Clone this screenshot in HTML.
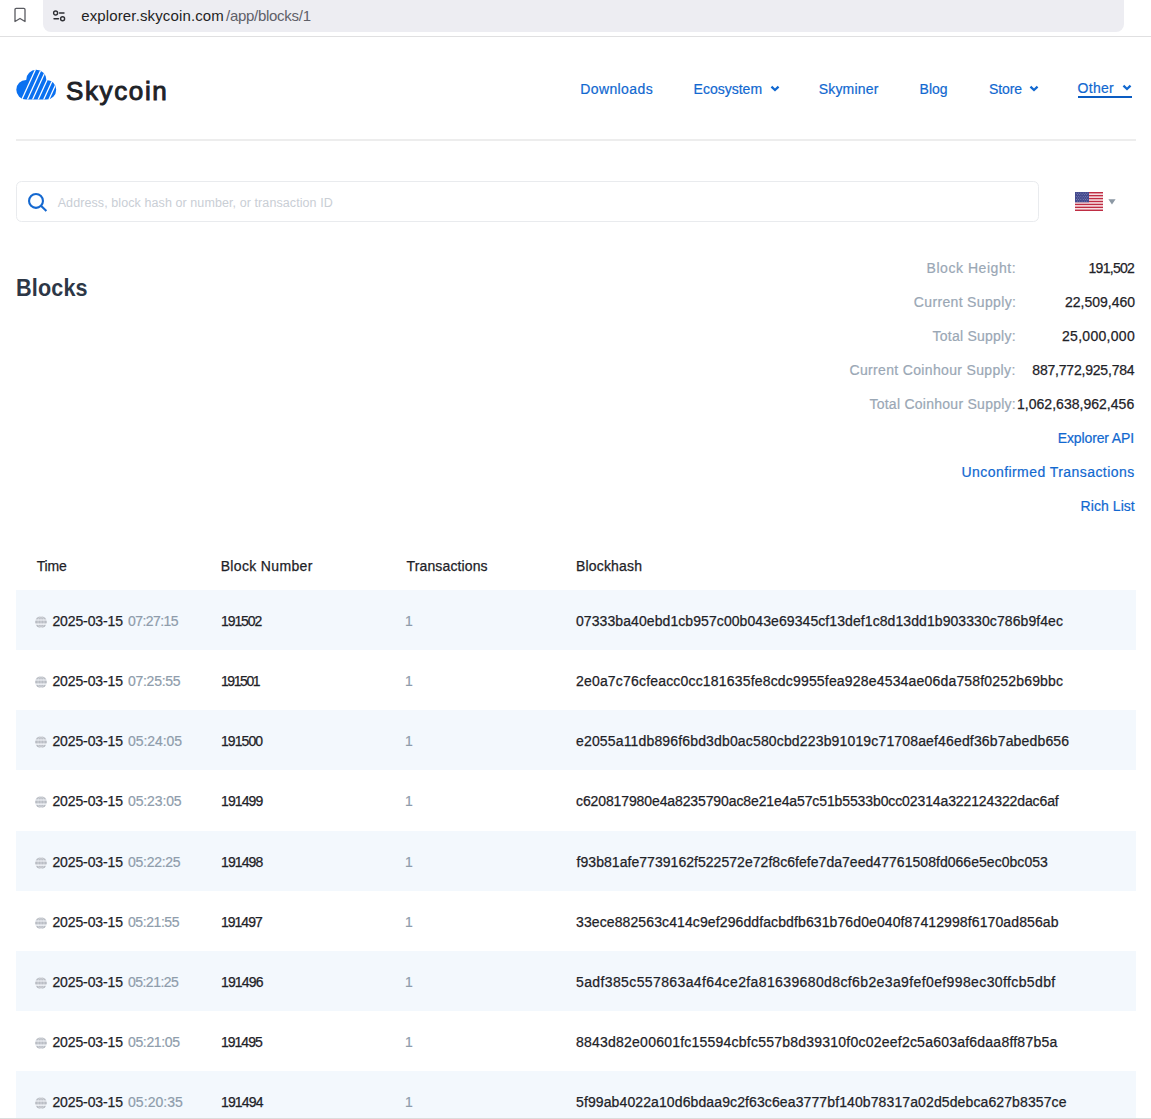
<!DOCTYPE html>
<html lang="en">
<head>
<meta charset="utf-8">
<title>Skycoin Explorer</title>
<style>
html,body{margin:0;padding:0;background:#fff;}
body{width:1151px;height:1119px;position:relative;overflow:hidden;font-family:"Liberation Sans",sans-serif;color:#1e2227;}
.abs{position:absolute;white-space:nowrap;}
#urlbar{left:43px;top:-12px;width:1081px;height:44px;background:#ededf2;border-radius:8px;}
#url1{top:6px;font-size:15px;line-height:20px;color:#1f1f24;}
#url2{top:6px;font-size:15px;line-height:20px;color:#5f6068;}
#chromeline{left:0;top:36px;width:1151px;height:1px;background:#e0e0e1;}
#logotext{top:71.500px;font-size:26px;line-height:38px;font-weight:normal;-webkit-text-stroke:0.950px #1e2227;color:#1e2227;}
.nav{top:79px;font-size:14px;line-height:20px;color:#1168d0;}
#otherline{left:1078px;top:96px;width:54px;height:2px;background:#0b5cc2;}
#hline{left:16px;top:139px;width:1120px;height:2px;background:#ededed;}
#search{left:16px;top:181px;width:1021px;height:39px;border:1.500px solid #e9ebee;border-radius:5.500px;}
#ph{top:194px;font-size:12.500px;line-height:18px;color:#c9ced5;}
#hd{top:271px;font-size:24px;line-height:34px;font-weight:bold;color:#2d3746;transform-origin:0 0;transform:scaleX(0.900);}
.lab{font-size:14px;line-height:20px;color:#9aa7b5;}
.val{font-size:14px;line-height:20px;color:#1e2227;}
.lnk{font-size:14px;line-height:20px;color:#1168d0;}
.th{top:556px;font-size:14px;line-height:20px;color:#1e2227;}
.row{left:16px;width:1120px;height:60px;}
.row.odd{background:#f3f8fd;}
.row div{position:absolute;top:21px;font-size:14px;line-height:20px;white-space:nowrap;}
.c1{color:#1e2227;}
.c1t{color:#8e9cab;}
.c2{color:#1e2227;}
.c3{color:#8e9cab;}
.c4{color:#1e2227;}
.globe{position:absolute;left:19.3px;top:25.600px;}
#bottomline{left:0;top:1118px;width:1151px;height:1px;background:#dcdcdc;}
.c1,.c2,.c4,.val,.th{-webkit-text-stroke:0.250px currentColor;}
.nav,.lnk,.lab,.c1t,.c3{-webkit-text-stroke:0.200px currentColor;}
</style>
</head>
<body>
<div class="abs" id="urlbar"></div>
<svg class="abs" style="left:13px;top:6px" width="14" height="18" viewBox="0 0 14 18"><path d="M3.200 2.300h7.600a1.200 1.200 0 0 1 1.200 1.200v12l-5-3l-5 3v-12a1.200 1.200 0 0 1 1.200-1.200z" fill="none" stroke="#5a5b61" stroke-width="1.300" stroke-linejoin="round"/></svg>
<svg class="abs" style="left:52px;top:9px" width="15" height="14" viewBox="0 0 15 14"><g fill="none" stroke="#2e2f34" stroke-width="1.400" stroke-linecap="round"><circle cx="3.600" cy="4" r="2"/><path d="M7.500 4h4.500"/><circle cx="10.600" cy="9.700" r="2"/><path d="M2 9.700h4.500"/></g></svg>
<div class="abs" id="url1" style="left:81.20px;letter-spacing:0.137px;">explorer.skycoin.com</div>
<div class="abs" id="url2" style="left:226.00px;letter-spacing:-0.283px;">/app/blocks/1</div>
<div class="abs" id="chromeline"></div>

<svg class="abs" id="logo" style="left:16px;top:69px" width="41" height="32" viewBox="0 0 41 32">
<defs><clipPath id="cl"><circle cx="10.100" cy="20.800" r="9.800"/><circle cx="20.300" cy="10.900" r="10.100"/><circle cx="30.400" cy="20.800" r="9.800"/><rect x="10" y="14" width="20.400" height="16.600"/></clipPath></defs>
<g clip-path="url(#cl)"><rect width="41" height="32" fill="#0a70f0"/>
<g stroke="#fff" stroke-width="1.250"><path d="M19.680 0L5.350 31.500"/><path d="M25.280 0L10.950 31.500"/><path d="M30.480 0L16.150 31.500"/><path d="M36.080 0L21.750 31.500"/><path d="M41.580 0L27.250 31.500"/><path d="M46.780 0L32.450 31.500"/></g></g>
</svg>
<div class="abs" id="logotext" style="left:66.00px;letter-spacing:1.619px;">Skycoin</div>

<div class="abs nav" id="nav1" style="left:580.20px;letter-spacing:0.400px;">Downloads</div>
<div class="abs nav" id="nav2" style="left:693.60px;letter-spacing:0.000px;">Ecosystem</div>
<svg class="abs" style="left:769.6px;top:85px" width="10" height="8" viewBox="0 0 10 8"><path d="M1.450 1.700L5 5l3.550-3.300" fill="none" stroke="#1168d0" stroke-width="2.300"/></svg>
<div class="abs nav" id="nav3" style="left:818.70px;letter-spacing:0.199px;">Skyminer</div>
<div class="abs nav" id="nav4" style="left:919.60px;letter-spacing:-0.000px;">Blog</div>
<div class="abs nav" id="nav5" style="left:989.00px;letter-spacing:-0.125px;">Store</div>
<svg class="abs" style="left:1028.5px;top:85px" width="10" height="8" viewBox="0 0 10 8"><path d="M1.450 1.700L5 5l3.550-3.300" fill="none" stroke="#1168d0" stroke-width="2.300"/></svg>
<div class="abs nav" id="nav6" style="left:1077.50px;top:77.500px;letter-spacing:0.300px;">Other</div>
<svg class="abs" style="left:1122.3px;top:84.2px" width="10" height="8" viewBox="0 0 10 8"><path d="M1.450 1.700L5 5l3.550-3.300" fill="none" stroke="#1168d0" stroke-width="2.300"/></svg>
<div class="abs" id="otherline"></div>
<div class="abs" id="hline"></div>

<div class="abs" id="search"></div>
<svg class="abs" style="left:27px;top:192px" width="22" height="22" viewBox="0 0 22 22"><g fill="none" stroke="#1468d0" stroke-width="2.100"><circle cx="9" cy="8.900" r="6.950"/><path d="M13.700 13.600L19.400 19.100"/></g></svg>
<div class="abs" id="ph" style="left:57.70px;letter-spacing:0.088px;">Address, block hash or number, or transaction ID</div>
<svg class="abs" style="left:1075px;top:192px" width="28" height="19" viewBox="0 0 28 19"><rect width="28" height="19" fill="#fbeef0"/><g fill="#bf2d43"><rect y="0" width="28" height="1.460"/><rect y="2.920" width="28" height="1.460"/><rect y="5.850" width="28" height="1.460"/><rect y="8.770" width="28" height="1.460"/><rect y="11.690" width="28" height="1.460"/><rect y="14.620" width="28" height="1.460"/><rect y="17.540" width="28" height="1.460"/></g><rect width="14" height="10.300" fill="#444a8e"/><g fill="#fff" fill-opacity="0.600"><circle cx="1.30" cy="1.10" r="0.420"/><circle cx="3.60" cy="1.10" r="0.420"/><circle cx="5.90" cy="1.10" r="0.420"/><circle cx="8.20" cy="1.10" r="0.420"/><circle cx="10.50" cy="1.10" r="0.420"/><circle cx="12.80" cy="1.10" r="0.420"/><circle cx="2.45" cy="2.70" r="0.420"/><circle cx="4.75" cy="2.70" r="0.420"/><circle cx="7.05" cy="2.70" r="0.420"/><circle cx="9.35" cy="2.70" r="0.420"/><circle cx="11.65" cy="2.70" r="0.420"/><circle cx="1.30" cy="4.30" r="0.420"/><circle cx="3.60" cy="4.30" r="0.420"/><circle cx="5.90" cy="4.30" r="0.420"/><circle cx="8.20" cy="4.30" r="0.420"/><circle cx="10.50" cy="4.30" r="0.420"/><circle cx="12.80" cy="4.30" r="0.420"/><circle cx="2.45" cy="5.90" r="0.420"/><circle cx="4.75" cy="5.90" r="0.420"/><circle cx="7.05" cy="5.90" r="0.420"/><circle cx="9.35" cy="5.90" r="0.420"/><circle cx="11.65" cy="5.90" r="0.420"/><circle cx="1.30" cy="7.50" r="0.420"/><circle cx="3.60" cy="7.50" r="0.420"/><circle cx="5.90" cy="7.50" r="0.420"/><circle cx="8.20" cy="7.50" r="0.420"/><circle cx="10.50" cy="7.50" r="0.420"/><circle cx="12.80" cy="7.50" r="0.420"/><circle cx="2.45" cy="9.10" r="0.420"/><circle cx="4.75" cy="9.10" r="0.420"/><circle cx="7.05" cy="9.10" r="0.420"/><circle cx="9.35" cy="9.10" r="0.420"/><circle cx="11.65" cy="9.10" r="0.420"/></g></svg>
<svg class="abs" style="left:1108px;top:199px" width="8" height="6" viewBox="0 0 8 6"><path d="M0.400 0.200h7.200L4 5.600z" fill="#8c98a4"/></svg>

<div class="abs" id="hd" style="left:15.80px;letter-spacing:0.160px;">Blocks</div>

<div class="abs lab" id="l1" style="top:258px;left:926.60px;letter-spacing:0.541px;">Block Height:</div><div class="abs val" id="v1" style="top:258px;left:1088.50px;letter-spacing:-0.700px;">191,502</div>
<div class="abs lab" id="l2" style="top:292px;left:913.80px;letter-spacing:0.343px;">Current Supply:</div><div class="abs val" id="v2" style="top:292px;left:1065.10px;letter-spacing:-0.023px;">22,509,460</div>
<div class="abs lab" id="l3" style="top:326px;left:932.60px;letter-spacing:0.233px;">Total Supply:</div><div class="abs val" id="v3" style="top:326px;left:1062.00px;letter-spacing:0.289px;">25,000,000</div>
<div class="abs lab" id="l4" style="top:360px;left:849.50px;letter-spacing:0.339px;">Current Coinhour Supply:</div><div class="abs val" id="v4" style="top:360px;left:1032.30px;letter-spacing:-0.200px;">887,772,925,784</div>
<div class="abs lab" id="l5" style="top:394px;left:869.40px;letter-spacing:0.262px;">Total Coinhour Supply:</div><div class="abs val" id="v5" style="top:394px;left:1017.00px;letter-spacing:0.025px;">1,062,638,962,456</div>
<div class="abs lnk" id="k1" style="top:428px;left:1057.80px;letter-spacing:-0.137px;">Explorer API</div>
<div class="abs lnk" id="k2" style="top:462px;left:961.50px;letter-spacing:0.435px;">Unconfirmed Transactions</div>
<div class="abs lnk" id="k3" style="top:496px;left:1080.60px;letter-spacing:0.060px;">Rich List</div>

<div class="abs th" id="th1" style="left:36.70px;letter-spacing:-0.200px;">Time</div>
<div class="abs th" id="th2" style="left:220.70px;letter-spacing:0.337px;">Block Number</div>
<div class="abs th" id="th3" style="left:406.60px;letter-spacing:0.127px;">Transactions</div>
<div class="abs th" id="th4" style="left:575.90px;letter-spacing:0.190px;">Blockhash</div>

<div class="abs row odd" style="top:590px;height:60px"><svg class="globe" width="12" height="12" viewBox="0 0 12 12"><circle cx="6" cy="6" r="5.850" fill="#b9bdc4"/><g fill="none" stroke="#f7fafd"><path d="M0 3.950h12M0 8.150h12" stroke-width="1.150"/><path d="M6 0v12" stroke-width="0.550" stroke-opacity="0.700"/><ellipse cx="6" cy="6" rx="3" ry="5.700" stroke-width="0.550" stroke-opacity="0.700"/></g></svg><div class="c1" id="d1" style="left:36.40px;letter-spacing:-0.114px;">2025-03-15</div><div class="c1t" id="t1" style="left:112.00px;letter-spacing:-0.550px;">07:27:15</div><div class="c2" id="n1" style="left:205.00px;letter-spacing:-1.080px;">191502</div><div class="c3" id="x1" style="left:389.00px">1</div><div class="c4" id="h1" style="left:560.00px;letter-spacing:0.080px;">07333ba40ebd1cb957c00b043e69345cf13def1c8d13dd1b903330c786b9f4ec</div></div>
<div class="abs row" style="top:650px;height:60px"><svg class="globe" width="12" height="12" viewBox="0 0 12 12"><circle cx="6" cy="6" r="5.850" fill="#b9bdc4"/><g fill="none" stroke="#f7fafd"><path d="M0 3.950h12M0 8.150h12" stroke-width="1.150"/><path d="M6 0v12" stroke-width="0.550" stroke-opacity="0.700"/><ellipse cx="6" cy="6" rx="3" ry="5.700" stroke-width="0.550" stroke-opacity="0.700"/></g></svg><div class="c1" id="d2" style="left:36.40px;letter-spacing:-0.114px;">2025-03-15</div><div class="c1t" id="t2" style="left:112.00px;letter-spacing:-0.279px;">07:25:55</div><div class="c2" id="n2" style="left:205.00px;letter-spacing:-1.420px;">191501</div><div class="c3" id="x2" style="left:389.00px">1</div><div class="c4" id="h2" style="left:560.00px;letter-spacing:0.181px;">2e0a7c76cfeacc0cc181635fe8cdc9955fea928e4534ae06da758f0252b69bbc</div></div>
<div class="abs row odd" style="top:710px;height:60px"><svg class="globe" width="12" height="12" viewBox="0 0 12 12"><circle cx="6" cy="6" r="5.850" fill="#b9bdc4"/><g fill="none" stroke="#f7fafd"><path d="M0 3.950h12M0 8.150h12" stroke-width="1.150"/><path d="M6 0v12" stroke-width="0.550" stroke-opacity="0.700"/><ellipse cx="6" cy="6" rx="3" ry="5.700" stroke-width="0.550" stroke-opacity="0.700"/></g></svg><div class="c1" id="d3" style="left:36.40px;letter-spacing:-0.114px;">2025-03-15</div><div class="c1t" id="t3" style="left:112.00px;letter-spacing:-0.057px;">05:24:05</div><div class="c2" id="n3" style="left:205.00px;letter-spacing:-0.940px;">191500</div><div class="c3" id="x3" style="left:389.00px">1</div><div class="c4" id="h3" style="left:560.00px;letter-spacing:0.156px;">e2055a11db896f6bd3db0ac580cbd223b91019c71708aef46edf36b7abedb656</div></div>
<div class="abs row" style="top:770px;height:61px"><svg class="globe" width="12" height="12" viewBox="0 0 12 12"><circle cx="6" cy="6" r="5.850" fill="#b9bdc4"/><g fill="none" stroke="#f7fafd"><path d="M0 3.950h12M0 8.150h12" stroke-width="1.150"/><path d="M6 0v12" stroke-width="0.550" stroke-opacity="0.700"/><ellipse cx="6" cy="6" rx="3" ry="5.700" stroke-width="0.550" stroke-opacity="0.700"/></g></svg><div class="c1" id="d4" style="left:36.40px;letter-spacing:-0.114px;">2025-03-15</div><div class="c1t" id="t4" style="left:112.00px;letter-spacing:-0.129px;">05:23:05</div><div class="c2" id="n4" style="left:205.00px;letter-spacing:-0.880px;">191499</div><div class="c3" id="x4" style="left:389.00px">1</div><div class="c4" id="h4" style="left:560.00px;letter-spacing:-0.111px;">c620817980e4a8235790ac8e21e4a57c51b5533b0cc02314a322124322dac6af</div></div>
<div class="abs row odd" style="top:831px;height:60px"><svg class="globe" width="12" height="12" viewBox="0 0 12 12"><circle cx="6" cy="6" r="5.850" fill="#b9bdc4"/><g fill="none" stroke="#f7fafd"><path d="M0 3.950h12M0 8.150h12" stroke-width="1.150"/><path d="M6 0v12" stroke-width="0.550" stroke-opacity="0.700"/><ellipse cx="6" cy="6" rx="3" ry="5.700" stroke-width="0.550" stroke-opacity="0.700"/></g></svg><div class="c1" id="d5" style="left:36.40px;letter-spacing:-0.114px;">2025-03-15</div><div class="c1t" id="t5" style="left:112.00px;letter-spacing:-0.271px;">05:22:25</div><div class="c2" id="n5" style="left:205.00px;letter-spacing:-0.880px;">191498</div><div class="c3" id="x5" style="left:389.00px">1</div><div class="c4" id="h5" style="left:560.60px;letter-spacing:0.041px;">f93b81afe7739162f522572e72f8c6fefe7da7eed47761508fd066e5ec0bc053</div></div>
<div class="abs row" style="top:891px;height:60px"><svg class="globe" width="12" height="12" viewBox="0 0 12 12"><circle cx="6" cy="6" r="5.850" fill="#b9bdc4"/><g fill="none" stroke="#f7fafd"><path d="M0 3.950h12M0 8.150h12" stroke-width="1.150"/><path d="M6 0v12" stroke-width="0.550" stroke-opacity="0.700"/><ellipse cx="6" cy="6" rx="3" ry="5.700" stroke-width="0.550" stroke-opacity="0.700"/></g></svg><div class="c1" id="d6" style="left:36.40px;letter-spacing:-0.114px;">2025-03-15</div><div class="c1t" id="t6" style="left:112.00px;letter-spacing:-0.429px;">05:21:55</div><div class="c2" id="n6" style="left:205.00px;letter-spacing:-1.000px;">191497</div><div class="c3" id="x6" style="left:389.00px">1</div><div class="c4" id="h6" style="left:560.00px;letter-spacing:0.108px;">33ece882563c414c9ef296ddfacbdfb631b76d0e040f87412998f6170ad856ab</div></div>
<div class="abs row odd" style="top:951px;height:60px"><svg class="globe" width="12" height="12" viewBox="0 0 12 12"><circle cx="6" cy="6" r="5.850" fill="#b9bdc4"/><g fill="none" stroke="#f7fafd"><path d="M0 3.950h12M0 8.150h12" stroke-width="1.150"/><path d="M6 0v12" stroke-width="0.550" stroke-opacity="0.700"/><ellipse cx="6" cy="6" rx="3" ry="5.700" stroke-width="0.550" stroke-opacity="0.700"/></g></svg><div class="c1" id="d7" style="left:36.40px;letter-spacing:-0.114px;">2025-03-15</div><div class="c1t" id="t7" style="left:112.00px;letter-spacing:-0.529px;">05:21:25</div><div class="c2" id="n7" style="left:205.00px;letter-spacing:-0.860px;">191496</div><div class="c3" id="x7" style="left:389.00px">1</div><div class="c4" id="h7" style="left:560.00px;letter-spacing:0.382px;">5adf385c557863a4f64ce2fa81639680d8cf6b2e3a9fef0ef998ec30ffcb5dbf</div></div>
<div class="abs row" style="top:1011px;height:60px"><svg class="globe" width="12" height="12" viewBox="0 0 12 12"><circle cx="6" cy="6" r="5.850" fill="#b9bdc4"/><g fill="none" stroke="#f7fafd"><path d="M0 3.950h12M0 8.150h12" stroke-width="1.150"/><path d="M6 0v12" stroke-width="0.550" stroke-opacity="0.700"/><ellipse cx="6" cy="6" rx="3" ry="5.700" stroke-width="0.550" stroke-opacity="0.700"/></g></svg><div class="c1" id="d8" style="left:36.40px;letter-spacing:-0.114px;">2025-03-15</div><div class="c1t" id="t8" style="left:112.00px;letter-spacing:-0.357px;">05:21:05</div><div class="c2" id="n8" style="left:205.00px;letter-spacing:-1.000px;">191495</div><div class="c3" id="x8" style="left:389.00px">1</div><div class="c4" id="h8" style="left:560.00px;letter-spacing:0.228px;">8843d82e00601fc15594cbfc557b8d39310f0c02eef2c5a603af6daa8ff87b5a</div></div>
<div class="abs row odd" style="top:1071px;height:60px"><svg class="globe" width="12" height="12" viewBox="0 0 12 12"><circle cx="6" cy="6" r="5.850" fill="#b9bdc4"/><g fill="none" stroke="#f7fafd"><path d="M0 3.950h12M0 8.150h12" stroke-width="1.150"/><path d="M6 0v12" stroke-width="0.550" stroke-opacity="0.700"/><ellipse cx="6" cy="6" rx="3" ry="5.700" stroke-width="0.550" stroke-opacity="0.700"/></g></svg><div class="c1" id="d9" style="left:36.40px;letter-spacing:-0.114px;">2025-03-15</div><div class="c1t" id="t9" style="left:112.00px;letter-spacing:0.057px;">05:20:35</div><div class="c2" id="n9" style="left:205.00px;letter-spacing:-0.860px;">191494</div><div class="c3" id="x9" style="left:389.00px">1</div><div class="c4" id="h9" style="left:560.00px;letter-spacing:0.111px;">5f99ab4022a10d6bdaa9c2f63c6ea3777bf140b78317a02d5debca627b8357ce</div></div>
<div class="abs" id="bottomline"></div>
</body>
</html>
